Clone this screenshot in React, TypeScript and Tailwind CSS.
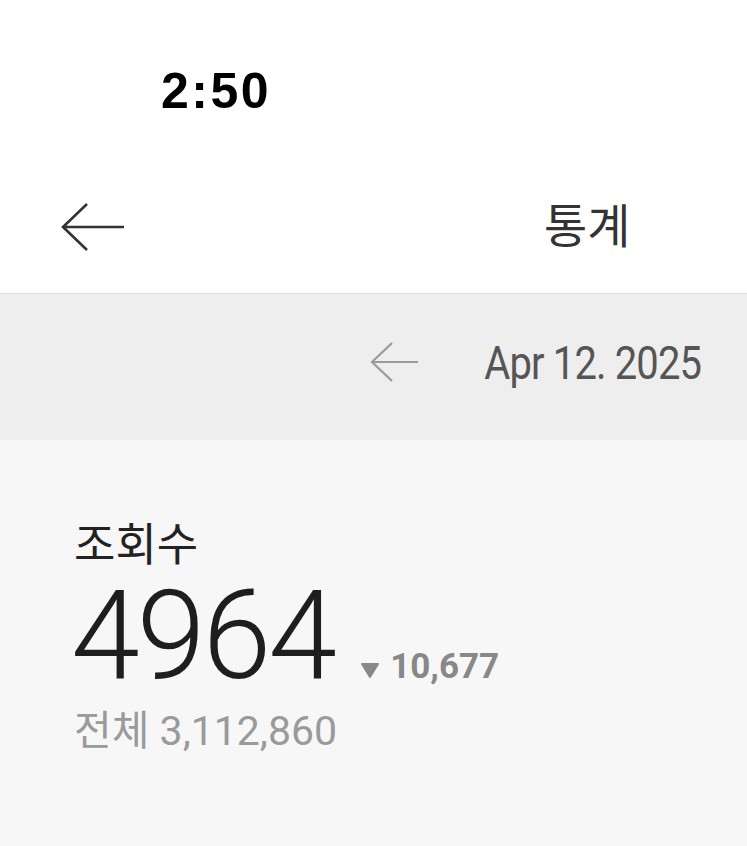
import React from "react";

const kr = { fontFamily: '"Roboto", "Noto Sans CJK KR", sans-serif' };

export default function App() {
  return (
    <div className="w-[747px] h-[846px] bg-[#f7f7f7] flex flex-col overflow-hidden" style={kr}>
      <div className="bg-white h-[293px] flex flex-col">
        <div className="h-[180px] pl-[161px] pt-[66px]">
          <span className="text-[50px] font-bold text-black leading-none tracking-[2.5px]" style={{ fontFamily: '"Liberation Sans", sans-serif' }}>
            2:50
          </span>
        </div>
        <div className="flex items-center h-[93px] pl-[60px]">
          <svg width="66" height="52" viewBox="0 0 66 52" className="block">
            <path d="M27 3 L3 26 L27 49 M3 26 L64 26" fill="none" stroke="#333" strokeWidth="2.6" />
          </svg>
          <span className="ml-[418px] text-[47px] font-normal text-[#333] leading-none">통계</span>
        </div>
      </div>
      <div className="h-px bg-[#dcdcdc]" />
      <div className="h-[146px] bg-[#eeeeee] flex items-center justify-end pr-[46px] pb-[10px]">
        <svg width="50" height="42" viewBox="0 0 50 42" className="block mr-[26px]">
          <path d="M22 2 L2 21 L22 40 M2 21 L48 21" fill="none" stroke="#9a9a9a" strokeWidth="2.2" />
        </svg>
        <span className="inline-block origin-right scale-x-[0.85] text-[47px] font-normal text-[#555] leading-none tracking-[-1px]">
          Apr 12. 2025
        </span>
      </div>
      <div className="flex-1 bg-[#f7f7f7] pl-[74px] pt-[83px]">
        <div className="text-[45px] text-[#222] leading-none">조회수</div>
        <div className="flex items-baseline mt-[6px] -ml-[3px]">
          <span className="text-[124px] font-light text-[#1e1e1e] leading-none tracking-[-3px]">4964</span>
          <svg width="20" height="16" viewBox="0 0 20 16" className="block ml-[26px] mr-[10px]">
            <path d="M2 2 L18 2 L10 15 Z" fill="#888" stroke="#888" strokeWidth="2" strokeLinejoin="round" />
          </svg>
          <span className="text-[35px] font-bold text-[#888] leading-none">10,677</span>
        </div>
        <div className="text-[41px] text-[#9a9a9a] leading-none mt-[13px]">전체 3,112,860</div>
      </div>
    </div>
  );
}
